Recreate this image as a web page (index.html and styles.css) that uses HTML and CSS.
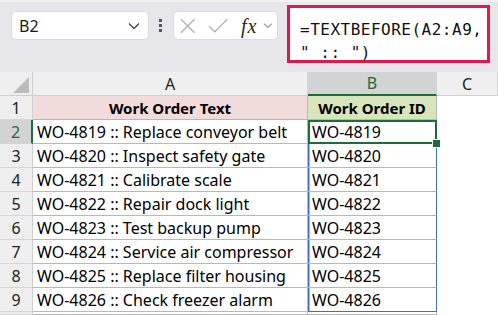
FILE: index.html
```html
<!DOCTYPE html>
<html lang="en">
<head>
    <meta charset="UTF-8">
    <title>TEXTBEFORE</title>
    <link rel="stylesheet" href="styles.css">
</head>
<body>
<div class="app">
    <div class="toolbar">
        <div class="namebox">
            <span>B2</span>
            <svg width="12" height="8" viewBox="0 0 12 8"><path d="M1 1.5 L6 6.5 L11 1.5" fill="none" stroke="#444" stroke-width="1.3"/></svg>
        </div>
        <div class="dots"><i></i><i></i><i></i></div>
        <div class="fxbox">
            <svg width="16" height="16" viewBox="0 0 16 16"><path d="M1 1 L15 15 M15 1 L1 15" stroke="#b4b4b4" stroke-width="1.4"/></svg>
            <svg width="21" height="16" viewBox="0 0 21 16"><path d="M1 8 L7 14 L20 1" fill="none" stroke="#b4b4b4" stroke-width="1.4"/></svg>
            <span class="fx">fx</span>
            <svg width="10" height="7" viewBox="0 0 10 7"><path d="M1 1.5 L5 5.5 L9 1.5" fill="none" stroke="#999" stroke-width="1.2"/></svg>
        </div>
        <div class="formula">=TEXTBEFORE(A2:A9,<br>" :: ")</div>
    </div>

    <div class="sheet">
        <div class="corner"><span></span></div>
        <div class="colhead">A</div>
        <div class="colhead sel">B</div>
        <div class="colhead">C</div>

        <div class="rowhead">1</div>
        <div class="cell title pink">Work Order Text</div>
        <div class="cell title green">Work Order ID</div>
        <div class="cell blank"></div>

        <div class="rowhead sel">2</div>
        <div class="cell">WO-4819 :: Replace conveyor belt</div>
        <div class="cell id active">WO-4819</div>
        <div class="cell blank"></div>

        <div class="rowhead">3</div>
        <div class="cell">WO-4820 :: Inspect safety gate</div>
        <div class="cell id">WO-4820</div>
        <div class="cell blank"></div>

        <div class="rowhead">4</div>
        <div class="cell">WO-4821 :: Calibrate scale</div>
        <div class="cell id">WO-4821</div>
        <div class="cell blank"></div>

        <div class="rowhead">5</div>
        <div class="cell">WO-4822 :: Repair dock light</div>
        <div class="cell id">WO-4822</div>
        <div class="cell blank"></div>

        <div class="rowhead">6</div>
        <div class="cell">WO-4823 :: Test backup pump</div>
        <div class="cell id">WO-4823</div>
        <div class="cell blank"></div>

        <div class="rowhead">7</div>
        <div class="cell">WO-4824 :: Service air compressor</div>
        <div class="cell id">WO-4824</div>
        <div class="cell blank"></div>

        <div class="rowhead">8</div>
        <div class="cell">WO-4825 :: Replace filter housing</div>
        <div class="cell id">WO-4825</div>
        <div class="cell blank"></div>

        <div class="rowhead">9</div>
        <div class="cell">WO-4826 :: Check freezer alarm</div>
        <div class="cell id last">WO-4826</div>
        <div class="cell blank"></div>

        <div class="rowhead"></div>
        <div class="cell"></div>
        <div class="cell"></div>
        <div class="cell blank"></div>
    </div>
</div>
</body>
</html>
```

FILE: styles.css
```css
*{
    margin: 0;
    padding: 0;
    box-sizing: border-box;
}
body{
    width: 498px;
    height: 315px;
    overflow: hidden;
    background: #fff;
    font-family: "Noto Sans", "Liberation Sans", sans-serif;
}
.toolbar{
    display: flex;
    align-items: flex-start;
    height: 72px;
    background: #e7e7eb;
    border-top: 2px solid #f2f2f4;
}
.namebox{
    display: flex;
    justify-content: space-between;
    align-items: center;
    width: 138px;
    height: 29px;
    margin: 9px 0 0 11px;
    padding: 0 8px 0 7px;
    background: #fff;
    border: 1px solid #d9d9dd;
    border-radius: 5px;
    font-size: 16px;
    color: #1a1a1a;
}
.dots{
    display: flex;
    flex-direction: column;
    gap: 2px;
    margin: 17px 0 0 10px;
}
.dots i{
    display: block;
    width: 3px;
    height: 3px;
    background: #555;
}
.fxbox{
    display: flex;
    align-items: center;
    gap: 12px;
    width: 105px;
    height: 29px;
    margin: 9px 0 0 11px;
    padding: 0 4px 0 6px;
    background: #fff;
    border: 1px solid #dcdce0;
    border-radius: 5px;
}
.fx{
    font-family: "Liberation Serif", serif;
    font-style: italic;
    font-size: 20px;
    line-height: 20px;
    color: #2a2a2a;
    margin: 0 -6px 0 1px;
    letter-spacing: 1px;
}
.formula{
    width: 203px;
    height: 58px;
    margin: 3px 0 0 9px;
    padding: 10px 0 0 10px;
    background: #fff;
    border: 3px solid #e0184b;
    font-family: "DejaVu Sans Mono", "Liberation Mono", monospace;
    font-size: 16px;
    letter-spacing: 0.5px;
    line-height: 23px;
    color: #111;
}
.sheet{
    display: grid;
    grid-template-columns: 33px 275px 129px 1fr;
    grid-template-rows: repeat(10, 24px) 3px;
    font-size: 16px;
    color: #000;
}
.corner{
    display: flex;
    justify-content: flex-end;
    align-items: flex-end;
    padding: 0 3px 2px 0;
    background: #efefef;
    border-right: 1px solid #cfcfcf;
    border-bottom: 1px solid #cfcfcf;
}
.corner span{
    width: 0;
    height: 0;
    border-left: 16px solid transparent;
    border-bottom: 16px solid #bdbdbd;
}
.colhead{
    display: flex;
    justify-content: center;
    align-items: center;
    background: #efefef;
    border-right: 1px solid #d6d6d6;
    border-bottom: 1px solid #cfcfcf;
    color: #222;
}
.colhead.sel{
    background: #d3d3d3;
    color: #1e6b3c;
    border-bottom: 2px solid #1e6b3c;
}
.rowhead{
    display: flex;
    justify-content: center;
    align-items: center;
    background: #efefef;
    border-right: 1px solid #cfcfcf;
    border-bottom: 1px solid #d6d6d6;
    color: #222;
}
.rowhead.sel{
    background: #d3d3d3;
    color: #1e6b3c;
    border-right: 2px solid #1e6b3c;
}
.cell{
    display: flex;
    align-items: center;
    padding-left: 4px;
    border-right: 1px solid #b8b8b8;
    border-bottom: 1px solid #b8b8b8;
    white-space: nowrap;
    overflow: hidden;
}
.cell.blank{
    border: none;
}
.title{
    justify-content: center;
    padding-left: 0;
    font-size: 15px;
    font-weight: bold;
}
.pink{
    background: #f2dcdb;
}
.green{
    background: #d8e4bc;
}
.cell.id{
    border-right: 1.5px solid #3f6fbf;
    box-shadow: inset 1.5px 0 #3f6fbf;
}
.cell.last{
    border-bottom: 1.5px solid #3f6fbf;
}
.cell.active{
    position: relative;
    overflow: visible;
    border-right: none;
    border-bottom: none;
    box-shadow: inset 0 0 0 2px #1e6b3c;
}
.cell.active::after{
    content: "";
    position: absolute;
    right: -4px;
    bottom: -4px;
    width: 7px;
    height: 7px;
    background: #1e6b3c;
    border: 1px solid #fff;
}
```
